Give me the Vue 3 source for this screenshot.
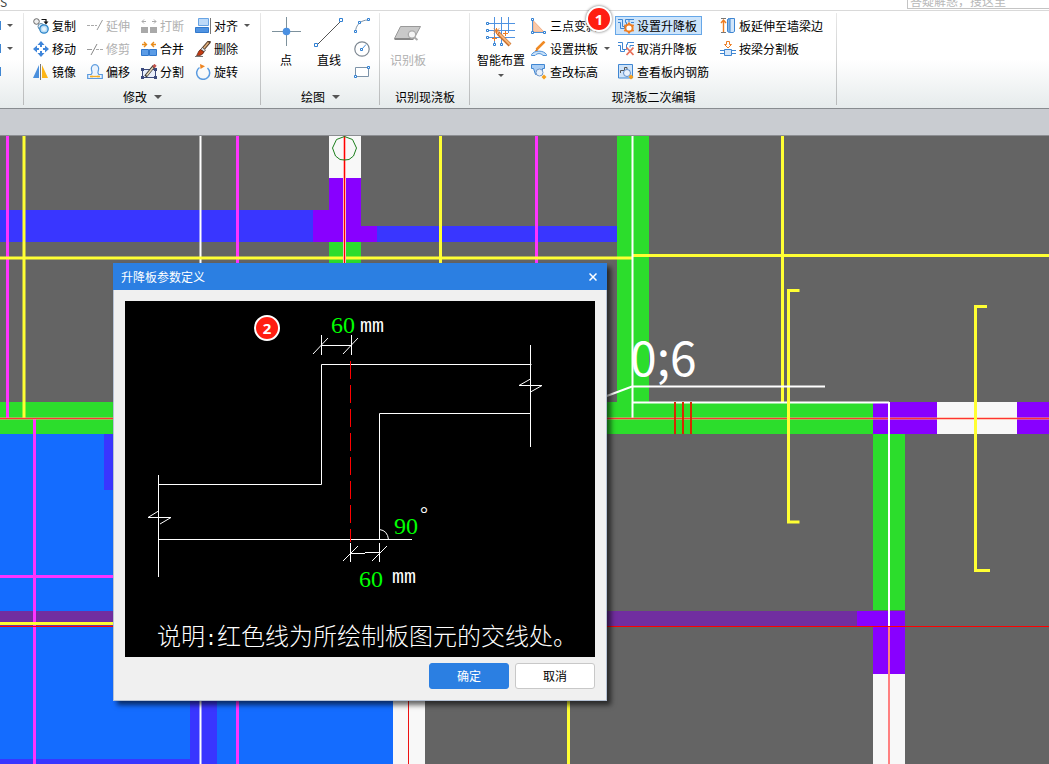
<script setup>
import { ref } from 'vue'

const keyword = ref('')

const blue = '#4a90d9'

const icons = {
  copy: `<circle cx="3.5" cy="3.5" r="2.8" fill="#eee" stroke="#666"/><path d="M8.500 1.500h4.500v3" fill="none" stroke="#111" stroke-width="1.200"/><path d="M10.500 3.500h5L13 6.500z" fill="#111"/><circle cx="8" cy="8.500" r="3" fill="#e6f1fb" stroke="#5b87a8"/><circle cx="11" cy="11" r="4.200" fill="#b9dcf5" stroke="#2a84c8" stroke-width="1.300"/><circle cx="11" cy="11" r="2" fill="#e6f4fd"/>`,
  move: `<g fill="#3f86da"><path d="M8 0l3.500 4h-7zM8 16l3.500-4h-7zM0 8l4-3.500v7zM16 8l-4-3.500v7z"/><path d="M7 4h2v2H7zM7 10h2v2H7zM4 7h2v2H4zM10 7h2v2h-2z"/></g>`,
  mirror: `<path d="M6 1v13H0z" fill="#4a8fdc"/><path d="M9 1v13h6z" fill="#fdb515"/><path d="M7.500 0v16" stroke="#777"/>`,
  extend: `<path d="M0 7.500h10" stroke="#aaa" stroke-dasharray="3 1"/><path d="M10 12l5.500-10" stroke="#999"/>`,
  trim: `<path d="M0 8.500h5" stroke="#999"/><path d="M9 8.500h7" stroke="#aaa" stroke-dasharray="3 1"/><path d="M4 14L10 3" stroke="#888"/>`,
  offset: `<path d="M.7 14.500v-4h3.500C6 9 5 7.500 4.500 6c-.8-3 1-5.300 3.500-5.300S12.300 3 11.500 6c-.5 1.500-1.500 3 .3 4.500h3.500v4z" fill="#eaf3fd" stroke="#5a9ade" stroke-width="1.200"/><path d="M3.500 12.500h9" stroke="#f5ae22" stroke-width="1.300"/><path d="M3 12.500h3M10 12.500h3" stroke="#f5ae22" stroke-width="1.300"/>`,
  breakAt: `<path d="M0 9h7v6H0zM9 9h7v6H9z" fill="#a9a9a9"/><path d="M1 3.500h4M11 3.500h4M3 1.500l-2 2 2 2M13 1.500l2 2-2 2" fill="none" stroke="#aaa"/>`,
  merge: `<path d="M.5 8.500h7v6h-7zM8.500 8.500h7v6h-7z" fill="#5b9ce6" stroke="#3178cc"/><path d="M1 3.500h4M11 3.500h4M3 1l2.500 2.500L3 6M13 1l-2.500 2.500L13 6" fill="none" stroke="#e88b1a" stroke-width="1.400"/>`,
  split: `<path d="M1.500 5.500h13v8h-13z" fill="#e8eefa" stroke="#3c4a7d"/><path d="M0 4h3v3H0zM13 4h3v3h-3zM0 12h3v3H0zM13 12h3v3h-3z" fill="#3c4a7d"/><path d="M4.500 12.500L13 2" stroke="#3a3a3a" stroke-width="3"/><path d="M5.500 11.500L12 3.500" stroke="#e9d9b8" stroke-width="1.500"/><path d="M12.500 3.200l2-2.400" stroke="#c0524a" stroke-width="3"/>`,
  align: `<path d="M3.500.5h10v7h-10z" fill="#bcd9f8" stroke="#68a4e4"/><path d="M.5 9.500h13v5H.5z" fill="#4f93e2" stroke="#3279cc"/><path d="M15.500 0v16" stroke="#777"/>`,
  erase: `<path d="M14 1L8 8" stroke="#5a4030" stroke-width="3.500" stroke-linecap="round"/><path d="M13.500 1.500L8.500 7.500" stroke="#e3b27b" stroke-width="1.500"/><path d="M7.500 6.500l3 2.500-1.500 2-3.500-2.500z" fill="#ddd" stroke="#444" stroke-width=".7"/><path d="M5.500 8.500L9 11c-1.500 3-4 4-7.500 3.500C3 13 3 10 5.500 8.500z" fill="#c43a12" stroke="#4a2010" stroke-width=".7"/><path d="M0 15.500h8" stroke="#777"/>`,
  rotate: `<path d="M4.500 3.500A6.500 6.500 0 1 0 12.500 4" fill="none" stroke="#5a9be0" stroke-width="1.500"/><path d="M5 0l5 2.300L5.500 5z" fill="#ee8420"/>`,
  arc: `<path d="M1.500 14C1.500 7 7 2 14 2" fill="none" stroke="#7d93a8"/><g fill="#fff" stroke="#2f7fd2"><path d="M.5 12.500h2v2h-2zM4.500 3.500h2v2h-2zM13.500.5h2v2h-2z"/></g>`,
  circle: `<circle cx="8" cy="8" r="7.200" fill="#fff" stroke="#7d8791" stroke-width="1.200"/><path d="M8 8l4-4.500" stroke="#4a90d9"/><path d="M6.500 7.500h2v2h-2z" fill="#fff" stroke="#2f7fd2"/>`,
  rect: `<path d="M1.500 3.500h13v9h-13z" fill="#fff" stroke="#7d93a8"/><g fill="#fff" stroke="#2f7fd2"><path d="M13.500 2.500h2v2h-2zM.5 11.500h2v2h-2z"/></g>`,
  slope: `<path d="M2 2.500L13 14H2z" fill="#fbc9a8" stroke="#f0ae86"/><path d="M1.500 2v12.500H14" fill="none" stroke="${blue}"/><g fill="#fff" stroke="#2f7fd2"><path d="M.5.5h2v2h-2zM.5 13.500h2v2h-2zM12.500 13.500h2v2h-2z"/></g>`,
  arch: `<path d="M5.500 8.500L13.500.5" stroke="#f08a24" stroke-width="2.500"/><path d="M3.500 10.500l2-2.500 1.500 1.500z" fill="#d66a14"/><path d="M.5 13.500c3-4.500 12-4.500 15 0v1h-3.500c-2-2.500-6-2.500-8 0H.5z" fill="#c9e1f9" stroke="#4a90d9"/>`,
  level: `<path d="M.5.5h13v4h-2v6h-7l-2-6h-2z" fill="#a9cdf4" stroke="#3f86d2"/><circle cx="8.500" cy="8.500" r="3.500" fill="#e8f0fa" stroke="#6d95c8"/><path d="M13 10.500l2.500 2.500-2.500 2.500-2.500-2.500z" fill="#f5a01e"/>`,
  lift: `<path d="M0 1.500h4.500v7h4v-4h-1v-3H16M0 4.500h2.500v6h4v-2M11 4V1.500M16 4.500h-3" fill="none" stroke="#3f86d2"/><circle cx="11" cy="10" r="3.600" fill="#fff" stroke="#ee7d22" stroke-width="2"/><path d="M11 4.500v2M11 13.500v2M6.300 7.200l1.700 1M14 12l1.700 1M6.300 13l1.700-1M14 8l1.700-1" stroke="#ee7d22" stroke-width="2"/>`,
  unlift: `<path d="M0 1.500h4.500v7h4v-5h1v-2H16M0 4.500h2.500v6h4v-2M16 4.500h-4v2" fill="none" stroke="#3f86d2"/><path d="M8.500 6.500l7 7.500M15.500 6.500l-7 7.500" stroke="#e8705a" stroke-width="1.800"/>`,
  rebar: `<path d="M.5.5h14v13.500H.5z" fill="#cfe3f8" stroke="#3f86d2"/><path d="M2.500 9V6.500h4v-3h2.500v3h3" fill="none" stroke="#555"/><circle cx="9" cy="9" r="3.500" fill="#e9f1fb" stroke="#5d8fcc"/><path d="M13 10.500l2.500 2.500-2.500 2.500-2.500-2.500z" fill="#f5a01e"/>`,
  toWall: `<path d="M3.500 14V2M1 5l2.500-3L6 5" fill="none" stroke="#ee7d22" stroke-width="1.400"/><path d="M1 .5h5M1 14.500h5" stroke="#777"/><path d="M7.500 1.500l1.500-1v14M9.500.5h5v13l-1.500 1H9.500l-2-1v-12z" fill="#d3e6fa" stroke="#3f86d2"/><path d="M10 1v13" stroke="#3f86d2"/>`,
  byBeam: `<path d="M6.500.5h3v3h2L8 7 4.500 3.500h2z" fill="#fff" stroke="#ee7d22"/><path d="M4.500 8.500h7v6h-7z" fill="#d3e6fa" stroke="#3f86d2"/><path d="M0 9.500h4M12 9.500h4M0 12.500h4M12 12.500h4" stroke="#3f86d2"/>`,
  point: `<path d="M16.500 1v29M2 15.500h29" stroke="#7d919c"/><circle cx="16.500" cy="15.500" r="3.800" fill="#4a90e2"/>`,
  line: `<path d="M4 29L28 5" stroke="#555"/><g fill="#fff" stroke="#2f7fd2"><path d="M1.500 27.500h3v3h-3zM26.500 2.500h3v3h-3z"/></g>`,
  detect: `<path d="M8.500 10.500h20L22 22.500H2.500z" fill="#c9c9c9" stroke="#999"/><path d="M2.500 23h19" stroke="#888" stroke-width="2"/><circle cx="20" cy="18.500" r="3.700" fill="#f4f4f4" stroke="#aaa" stroke-width="1.300"/><path d="M22.500 21.500l3 2.500" stroke="#aaa" stroke-width="2"/>`,
  smart: `<path d="M9.500 1v26M16.500 1v26M23.500 1v16M3 7.500h27M3 14.500h27M3 21.500h27" stroke="#4f93e2"/><g fill="#fff" stroke="#2f7fd2"><path d="M1.500 6.500h2v2h-2zM1.500 13.500h2v2h-2zM1.500 20.500h2v2h-2zM8.500 27.500h2v2h-2zM15.500 27.500h2v2h-2z"/></g><path d="M13 17l12 12" stroke="#c96d28" stroke-width="4"/><path d="M14 17.500l11 11" stroke="#f6b578" stroke-width="2"/><path d="M11.500 12v6M8.500 15h6M9 12.500l5 5M14 12.500l-5 5M9.500 20v5M7 22.500h5M20.500 15v5M18 17.500h5" stroke="#ee7d22"/>`
}

const modifyTools = [
  { label: '复制', icon: 'copy' },
  { label: '延伸', icon: 'extend', disabled: true },
  { label: '打断', icon: 'breakAt', disabled: true },
  { label: '对齐', icon: 'align', menu: true },
  { label: '移动', icon: 'move' },
  { label: '修剪', icon: 'trim', disabled: true },
  { label: '合并', icon: 'merge' },
  { label: '删除', icon: 'erase' },
  { label: '镜像', icon: 'mirror' },
  { label: '偏移', icon: 'offset' },
  { label: '分割', icon: 'split' },
  { label: '旋转', icon: 'rotate' }
]

const slabTools = [
  { label: '三点变斜', icon: 'slope' },
  { label: '设置升降板', icon: 'lift', active: true, step: 1 },
  { label: '板延伸至墙梁边', icon: 'toWall' },
  { label: '设置拱板', icon: 'arch', menu: true },
  { label: '取消升降板', icon: 'unlift' },
  { label: '按梁分割板', icon: 'byBeam' },
  { label: '查改标高', icon: 'level' },
  { label: '查看板内钢筋', icon: 'rebar' }
]

const shapes = ['arc', 'circle', 'rect']

// walls, beams and slabs: x, y, width, height, fill
const blocks = [
  [0, 298, 393, 900, '#146cff'],
  [104, 298, 10, 56, '#3936ff'],
  [190, 500, 27, 900, '#3936ff'],
  [0, 623, 217, 900, '#3936ff'],
  [393, 500, 32, 900, '#f8f8f8'],
  [0, 74, 313, 32, '#3936ff'],
  [377, 90, 240, 16, '#3936ff'],
  [329, 0, 32, 42, '#f8f8f8'],
  [329, 42, 32, 64, '#8800ff'],
  [313, 74, 16, 32, '#8800ff'],
  [361, 90, 16, 16, '#8800ff'],
  [329, 106, 32, 160, '#2cdd2c'],
  [617, 0, 32, 266, '#2cdd2c'],
  [0, 266, 873, 32, '#2cdd2c'],
  [873, 266, 64, 32, '#8800ff'],
  [937, 266, 80, 32, '#f8f8f8'],
  [1017, 266, '100%', 32, '#8800ff'],
  [873, 298, 32, 176, '#2cdd2c'],
  [0, 475, 857, 15, '#712ea0'],
  [857, 475, 48, 15, '#8800ff'],
  [873, 490, 32, 48, '#8800ff'],
  [873, 538, 32, 900, '#f8f8f8']
]

// x1, y1, x2, y2, colour, width
const lines = [
  [200.5, 0, 200.5, 900, '#ffffff', 2],
  [7.5, 0, 7.5, 282, '#ff33ff', 3],
  [24, 0, 24, 282, '#ffff33', 3],
  [237.5, 0, 237.5, 900, '#ff33ff', 3],
  [440.5, 0, 440.5, 200, '#ffff33', 3],
  [536.5, 0, 536.5, 200, '#ff33ff', 3],
  [0, 122, 632, 122, '#ffff33', 3],
  [633, 119.5, '100%', 119.5, '#ffff33', 3],
  [34.5, 282, 34.5, 900, '#ff33ff', 3],
  [0, 440.5, 200, 440.5, '#ff33ff', 3],
  [0, 487.5, 200, 487.5, '#ffff33', 3],
  [568.5, 500, 568.5, 900, '#ffff33', 3],
  [782.5, 0, 782.5, 266, '#ffff33', 3],
  [344.5, 0, 344.5, 200, '#ffb3b3', 3],
  [344.5, 0, 344.5, 200, '#ff0000', 1],
  [408.5, 500, 408.5, 900, '#ee1111', 1],
  [632.5, 0, 632.5, 282, '#ffffff', 2],
  [633, 266.5, 889, 266.5, '#ffffff', 2],
  [0, 282.5, '100%', 282.5, '#ffa080', 2],
  [0, 282.5, '100%', 282.5, '#ff3333', 1],
  [675, 266, 675, 298, '#d62a00', 2],
  [683, 266, 683, 298, '#d62a00', 2],
  [691, 266, 691, 298, '#d62a00', 2],
  [889, 266, 889, 490, '#ffffff', 2],
  [889, 490, 889, 900, '#ff8080', 2],
  [0, 490.5, '100%', 490.5, '#ff0000', 1]
]
</script>

<template>
  <div class="app">
    <header class="topbar">
      <span class="topbar_tab">S</span>
      <input v-model="keyword" class="topbar_search" type="text" aria-label="搜索" placeholder="答疑解惑，搜这里" />
    </header>

    <nav class="ribbon">
      <section class="group group_edge">
        <div class="edge_tools">
          <button v-for="n in 3" :key="n" class="edge_tool" :aria-label="'工具 ' + n">
            <i class="edge_mark"></i>
            <i v-if="n < 3" class="caret"></i>
          </button>
        </div>
      </section>

      <section class="group">
        <div class="group_body tools_modify">
          <button
            v-for="tool in modifyTools"
            :key="tool.label"
            class="tool"
            :disabled="tool.disabled"
          >
            <svg class="icon" viewBox="0 0 16 16" v-html="icons[tool.icon]"></svg>
            <span>{{ tool.label }}</span>
            <i v-if="tool.menu" class="caret"></i>
          </button>
        </div>
        <h2 class="group_title">修改<i class="caret caret_big"></i></h2>
      </section>

      <section class="group">
        <div class="group_body tools_draw">
          <button class="big">
            <svg class="icon_big" viewBox="0 0 32 32" v-html="icons.point"></svg>
            <span>点</span>
          </button>
          <button class="big">
            <svg class="icon_big" viewBox="0 0 32 32" v-html="icons.line"></svg>
            <span>直线</span>
          </button>
          <div class="tools_shape">
            <button v-for="shape in shapes" :key="shape" class="tool" :aria-label="shape">
              <svg class="icon" viewBox="0 0 16 16" v-html="icons[shape]"></svg>
            </button>
          </div>
        </div>
        <h2 class="group_title">绘图<i class="caret caret_big"></i></h2>
      </section>

      <section class="group">
        <div class="group_body tools_detect">
          <button class="big" disabled>
            <svg class="icon_big" viewBox="0 0 32 32" v-html="icons.detect"></svg>
            <span>识别板</span>
          </button>
        </div>
        <h2 class="group_title">识别现浇板</h2>
      </section>

      <section class="group">
        <div class="group_body tools_slab">
          <button class="big big_wide">
            <svg class="icon_big" viewBox="0 0 32 32" v-html="icons.smart"></svg>
            <span>智能布置</span>
            <i class="caret"></i>
          </button>
          <div class="slab_grid">
            <button
              v-for="tool in slabTools"
              :key="tool.label"
              class="tool"
              :class="{ tool_active: tool.active }"
            >
              <svg class="icon" viewBox="0 0 16 16" v-html="icons[tool.icon]"></svg>
              <span>{{ tool.label }}</span>
              <i v-if="tool.menu" class="caret"></i>
              <b v-if="tool.step" class="badge badge_tool">{{ tool.step }}</b>
            </button>
          </div>
        </div>
        <h2 class="group_title">现浇板二次编辑</h2>
      </section>
    </nav>

    <div class="strip"></div>

    <main class="canvas">
      <svg class="plan">
        <rect
          v-for="(b, i) in blocks"
          :key="'b' + i"
          :x="b[0]"
          :y="b[1]"
          :width="b[2]"
          :height="b[3]"
          :fill="b[4]"
        />
        <line
          v-for="(l, i) in lines"
          :key="'l' + i"
          :x1="l[0]"
          :y1="l[1]"
          :x2="l[2]"
          :y2="l[3]"
          :stroke="l[4]"
          :stroke-width="l[5]"
        />
        <path
          d="M344.500 .5l8 3 4 8.500-3 8-4.500 3.500-4.500.5-4.500-.5-4.500-3.500-3-8 4-8.500z"
          fill="none"
          stroke="#1c7f1c"
        />
        <g fill="none" stroke="#ffff33" stroke-width="3">
          <path d="M799.500 154.500h-11v231.500h11" />
          <path d="M987 170.500h-11.500v264h14.500" />
        </g>
        <path d="M600 262.500l32-12h193" fill="none" stroke="#fff" stroke-width="2" />
        <text class="plan_mark" x="630" y="240">0;6</text>
      </svg>

      <div class="dialog" role="dialog" aria-label="升降板参数定义">
        <div class="dialog_head">
          <span>升降板参数定义</span>
          <button class="dialog_close" aria-label="关闭">
            <svg viewBox="0 0 8 8" width="8" height="8">
              <path d="M.5 .5l7 7M7.500 .5l-7 7" stroke="#fff" stroke-width="1.500" />
            </svg>
          </button>
        </div>

        <div class="dialog_body">
          <div class="figure">
            <svg class="figure_svg" viewBox="0 0 470 356">
              <g fill="none" stroke="#fff">
                <path d="M33 183.500h163.500v-120h210M33 238.500h254M254.500 238v-125.500h151" />
                <path d="M405.500 44v102M33.500 174v102" />
                <path d="M405.500 78L394 84.500h23L405.500 91M33.500 210L23 216.500h23L35 223" />
                <path d="M196.500 34v20M226.500 34v20M196 44.500h30M188 53l15-16M218 53l15-16" />
                <path d="M225.500 242v19M254.500 242v19M225 252.500h15M240 251.500h14M218 260l15-15M247 260l15-15" />
                <path d="M254.500 228.500q8 1 9 10" />
              </g>
              <path d="M225.500 60v181" stroke="#f00" stroke-dasharray="18 6" />
              <g class="value">
                <text x="206" y="32">60</text>
                <text x="269" y="233">90</text>
                <text x="234" y="286">60</text>
              </g>
              <g class="unit">
                <text x="235" y="31">mm</text>
                <text x="267" y="282">mm</text>
              </g>
              <text class="degree" x="295" y="220">°</text>
              <text class="note" x="32" y="344">说明<tspan class="colon">:</tspan>红色线为所绘制板图元的交线处。</text>
            </svg>
            <b class="badge badge_figure">2</b>
          </div>

          <div class="dialog_foot">
            <button class="btn btn_primary">确定</button>
            <button class="btn">取消</button>
          </div>
        </div>
      </div>
    </main>
  </div>
</template>

<style>
body {
  margin: 0;
}
</style>

<style scoped>
.app {
  display: flex;
  flex-direction: column;
  height: 100vh;
  overflow: hidden;
  font-family: 'Noto Sans CJK SC', sans-serif;
  font-size: 12px;
  line-height: 16px;
  color: #000;
  background: #fff;
}

button {
  font: inherit;
  color: inherit;
  background: none;
  border: 1px solid transparent;
  padding: 0;
  cursor: pointer;
}

button:disabled {
  color: #b0b0b0;
  cursor: default;
}

.topbar {
  display: flex;
  align-items: flex-end;
  justify-content: space-between;
  height: 10px;
  flex-shrink: 0;
  overflow: hidden;
  border-bottom: 1px solid #d9d9d9;
}

.topbar_tab {
  color: #444;
}

.topbar_search {
  box-sizing: border-box;
  width: 142px;
  height: 16px;
  margin-bottom: 1px;
  padding: 0 2px;
  border: 1px solid #c4c4c4;
  border-right: 0;
  font: inherit;
  outline: none;
}

.topbar_search::placeholder {
  color: #b8b8b8;
}

.ribbon {
  display: flex;
  height: 97px;
  flex-shrink: 0;
  background: linear-gradient(#fff 50%, #e6ebec);
}

.group {
  display: flex;
  flex-direction: column;
  justify-content: space-between;
  padding-top: 5px;
  padding-bottom: 3px;
  box-sizing: border-box;
  background: linear-gradient(#e8e8e8, #b8babb) right 2px / 1px 92px no-repeat;
}

.group_edge {
  width: 24px;
}

.edge_tools {
  display: grid;
  gap: 4px;
}

.edge_tool {
  display: flex;
  align-items: center;
  gap: 6px;
  height: 19px;
  border: 0;
}

.edge_mark {
  width: 1px;
  height: 9px;
  background: #3f86d2;
}

.group_body {
  display: flex;
}

.group_title {
  display: flex;
  align-items: center;
  justify-content: center;
  gap: 7px;
  margin: 0;
  padding: 0 15px;
  font-size: 12px;
  font-weight: 400;
  line-height: 16px;
}

.tool {
  position: relative;
  display: flex;
  align-items: center;
  gap: 3px;
  height: 19px;
  padding: 0 2px;
  white-space: nowrap;
}

.tool_active {
  background: #cce4fb;
  border-color: #66a7e8;
  padding-right: 4px;
}

.tool .caret {
  margin-left: 3px;
}

.icon {
  width: 16px;
  height: 16px;
  flex-shrink: 0;
}

.icon_big {
  width: 32px;
  height: 32px;
}

.caret {
  width: 0;
  height: 0;
  border: 3px solid transparent;
  border-top-color: #555;
  border-bottom: 0;
}

.caret_big {
  border-width: 4px;
  border-bottom: 0;
}

.big {
  display: flex;
  flex-direction: column;
  align-items: center;
  width: 42px;
  height: 65px;
  border: 0;
  white-space: nowrap;
}

.big span {
  margin-top: 4px;
}

.big .caret {
  margin-top: 6px;
}

.big_wide {
  width: 54px;
}

.tools_modify {
  display: grid;
  grid-template-columns: repeat(3, 54px) auto;
  gap: 4px 0;
  justify-items: start;
  padding: 0 8px 0 6px;
}

.tools_draw {
  gap: 1px;
  padding: 0 7px 0 4px;
}

.tools_shape {
  display: grid;
  gap: 4px;
}

.tools_detect {
  padding-left: 7px;
}

.tools_slab {
  padding: 0 11px 0 4px;
}

.slab_grid {
  display: grid;
  grid-template-columns: 87px 102px auto;
  gap: 4px 0;
  justify-items: start;
}

.badge {
  position: absolute;
  display: flex;
  align-items: center;
  justify-content: center;
  box-sizing: border-box;
  width: 26px;
  height: 26px;
  border: 2px solid #fff;
  border-radius: 50%;
  background: #ff1e12;
  color: #fff;
  font-family: 'Open Sans', sans-serif;
  font-size: 15px;
  font-weight: 700;
  box-shadow: 0 0 3px rgba(0, 0, 0, 0.6);
}

.badge_tool {
  left: -30px;
  top: -11px;
}

.badge_figure {
  left: 129px;
  top: 14px;
}

.strip {
  height: 26px;
  flex-shrink: 0;
  background: #c9ccd1;
  border-top: 1px solid #888c90;
  border-bottom: 1px solid #8c8e92;
}

.canvas {
  position: relative;
  flex: 1;
  overflow: hidden;
  background: #646464;
}

.plan {
  display: block;
  width: 100%;
  height: 100%;
}

.plan_mark {
  font-size: 48px;
  fill: #fff;
}

.dialog {
  position: absolute;
  left: 113px;
  top: 127px;
  background: #f0f0f0;
  box-shadow: 4px 4px 5px rgba(0, 0, 0, 0.6);
}

.dialog_head {
  display: flex;
  align-items: center;
  justify-content: space-between;
  height: 27px;
  padding: 0 4px 0 8px;
  background: #2b7fe2;
  color: #fff;
}

.dialog_close {
  display: flex;
  align-items: center;
  justify-content: center;
  width: 20px;
  height: 20px;
}

.dialog_body {
  padding: 11px;
  border: 1px solid #b6c2d4;
  border-top: 0;
}

.figure {
  position: relative;
  background: #000;
}

.figure_svg {
  display: block;
  width: 470px;
  height: 356px;
}

.value {
  font-family: 'Liberation Serif', serif;
  font-size: 24px;
  fill: #0f0;
}

.unit {
  font-family: 'Liberation Mono', monospace;
  font-size: 20px;
  fill: #fff;
}

.degree {
  font-family: 'Liberation Serif', serif;
  font-size: 20px;
  fill: #fff;
}

.note {
  font-size: 24px;
  font-weight: 300;
  fill: #fff;
}

.colon {
  font-family: 'Liberation Mono', monospace;
  font-size: 20px;
}

.dialog_foot {
  display: flex;
  justify-content: flex-end;
  gap: 6px;
  margin-top: 6px;
}

.btn {
  width: 80px;
  height: 26px;
  border: 1px solid #c8c8c8;
  border-radius: 3px;
  background: #fff;
}

.btn_primary {
  background: #2b7fe2;
  border-color: #2b7fe2;
  color: #fff;
}
</style>
